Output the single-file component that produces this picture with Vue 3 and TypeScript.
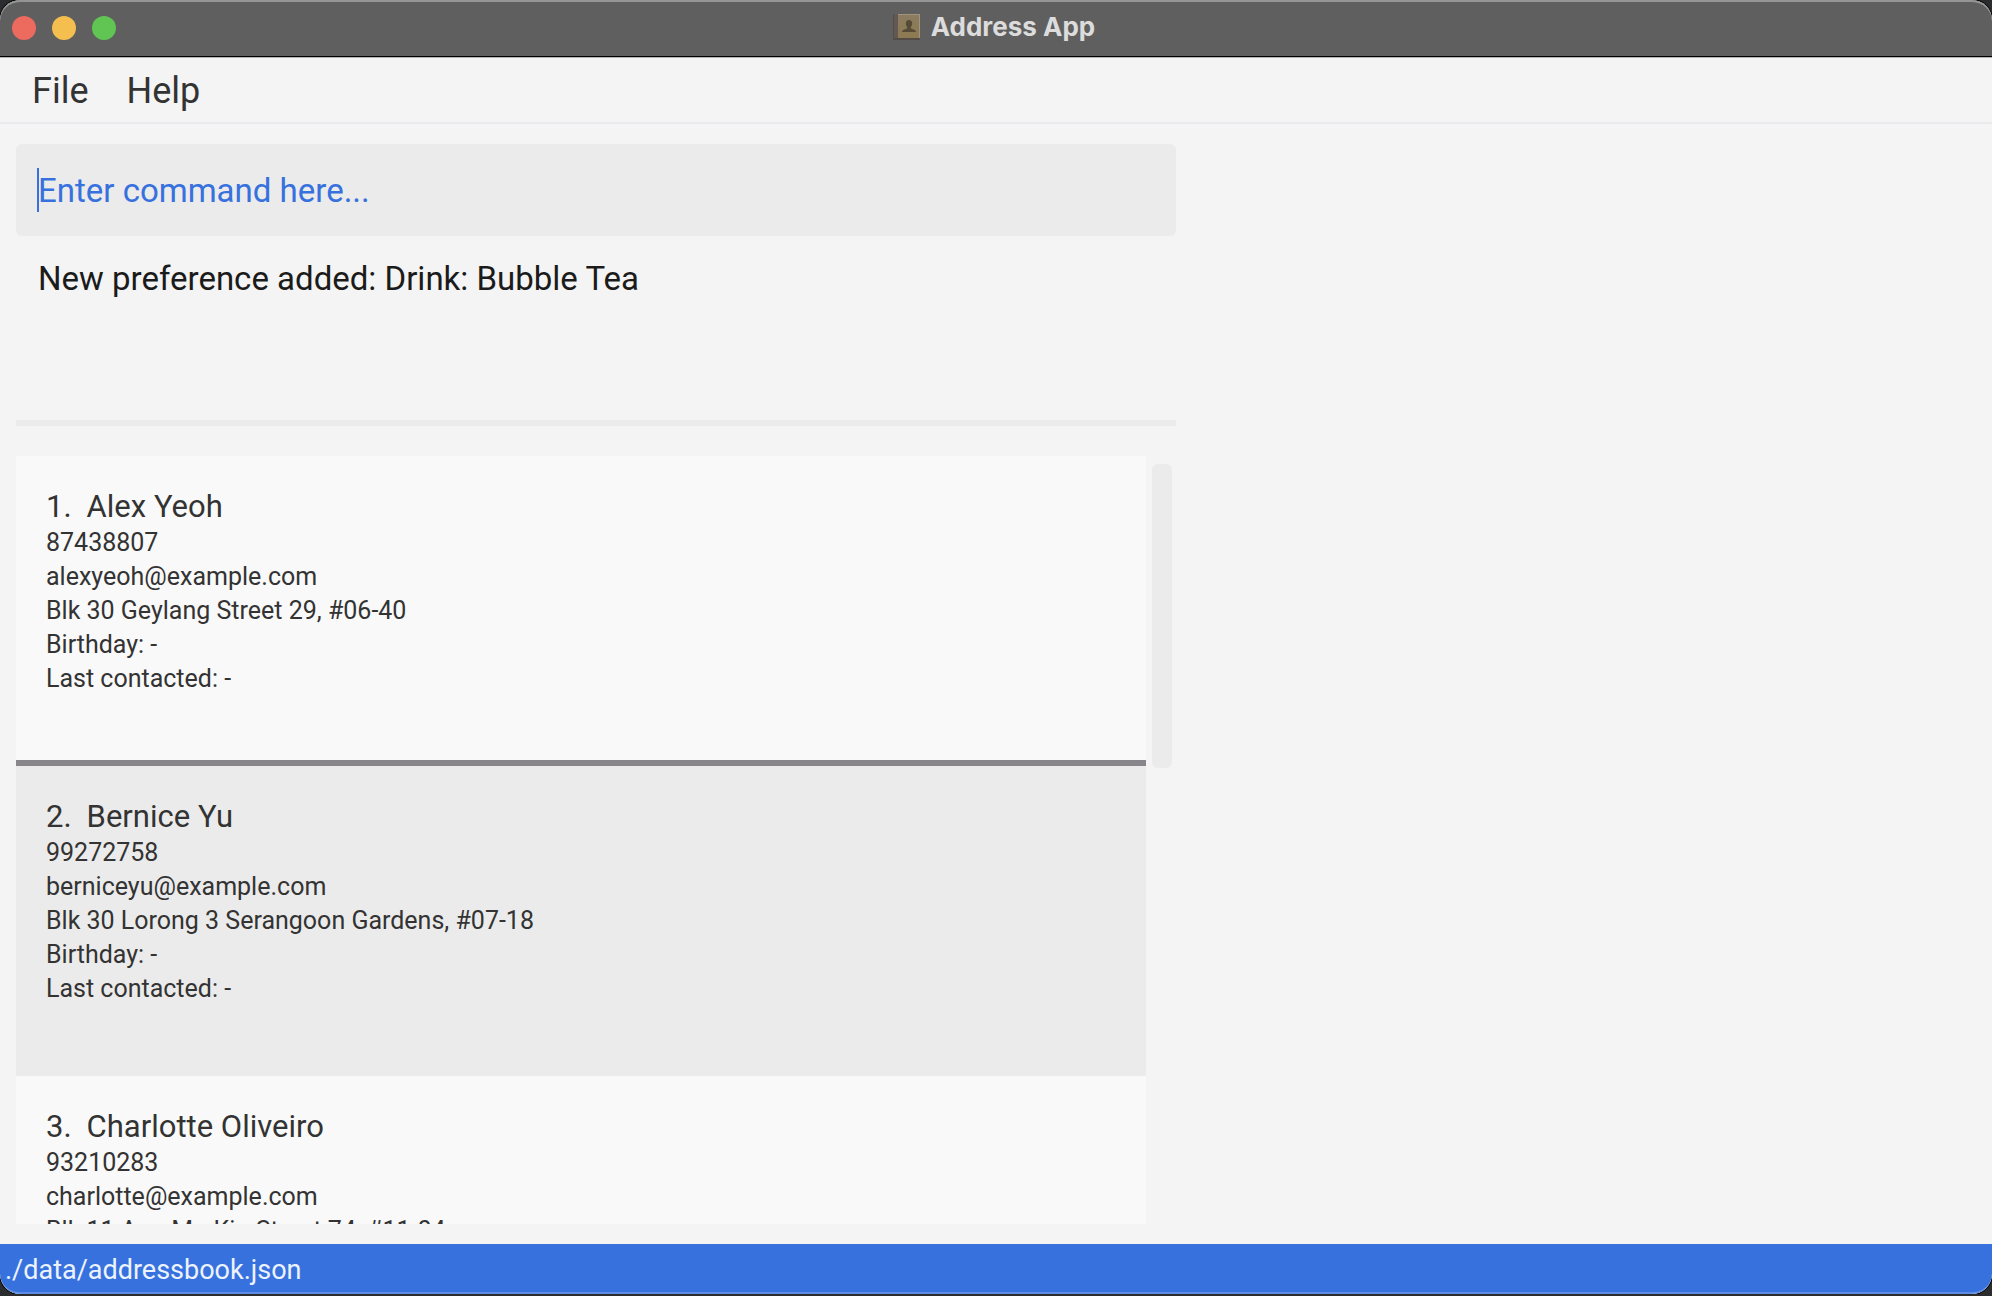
<script setup lang="ts">
import { ref } from 'vue'

interface Person {
  id: number
  name: string
  phone: string
  email: string
  address: string
  birthday: string
  lastContacted: string
}

const menus: string[] = ['File', 'Help']
const command = ref('')
const feedback = ref('New preference added: Drink: Bubble Tea')
const selectedId = ref(1)
const savePath = './data/addressbook.json'

const people: Person[] = [
  {
    id: 1,
    name: 'Alex Yeoh',
    phone: '87438807',
    email: 'alexyeoh@example.com',
    address: 'Blk 30 Geylang Street 29, #06-40',
    birthday: '-',
    lastContacted: '-',
  },
  {
    id: 2,
    name: 'Bernice Yu',
    phone: '99272758',
    email: 'berniceyu@example.com',
    address: 'Blk 30 Lorong 3 Serangoon Gardens, #07-18',
    birthday: '-',
    lastContacted: '-',
  },
  {
    id: 3,
    name: 'Charlotte Oliveiro',
    phone: '93210283',
    email: 'charlotte@example.com',
    address: 'Blk 11 Ang Mo Kio Street 74, #11-04',
    birthday: '-',
    lastContacted: '-',
  },
]
</script>

<template>
  <div class="window">
    <header class="titlebar">
      <div class="lights">
        <button class="light close" type="button" aria-label="Close"></button>
        <button class="light minimise" type="button" aria-label="Minimise"></button>
        <button class="light zoom" type="button" aria-label="Zoom"></button>
      </div>
      <svg class="book" viewBox="0 0 28 28" aria-hidden="true">
        <defs>
          <linearGradient id="cover" x1="0" y1="0" x2="0" y2="1">
            <stop offset="0" stop-color="#8b7c62" />
            <stop offset="1" stop-color="#8d7a50" />
          </linearGradient>
        </defs>
        <rect x="0" y="1" width="27" height="26" rx="1" fill="#524b48" />
        <rect x="1" y="1" width="4" height="24" fill="#625955" />
        <rect x="5" y="1" width="22" height="24" fill="url(#cover)" />
        <path d="M5 1.5H27M26.5 1V25" stroke="#a1947b" fill="none" />
        <path
          d="M16 7c-2 0-3.200 1.400-3.200 3.400 0 1.500.6 2.800 1.400 3.500v1.300c-1 1-5.200 1.200-5.200 3.800h14c0-2.600-4.200-2.800-5.200-3.800v-1.300c.8-.7 1.400-2 1.400-3.500C19.200 8.400 18 7 16 7z"
          fill="#564b37"
        />
      </svg>
      <h1 class="title">Address App</h1>
    </header>

    <nav class="menubar">
      <button v-for="menu in menus" :key="menu" class="menu" type="button">{{ menu }}</button>
    </nav>

    <div class="content">
      <main class="left">
        <div class="command">
          <input
            v-model="command"
            class="command-input"
            type="text"
            aria-label="Command"
            placeholder="Enter command here..."
          />
          <span v-if="!command" class="caret"></span>
        </div>
        <output class="result">{{ feedback }}</output>

        <section class="list-area">
          <ol class="list">
            <li
              v-for="person in people"
              :key="person.id"
              class="card"
              :class="{ selected: person.id === selectedId }"
              @click="selectedId = person.id"
            >
              <h2 class="name">
                <span>{{ person.id }}.</span>
                <span>{{ person.name }}</span>
              </h2>
              <p class="detail">{{ person.phone }}</p>
              <p class="detail">{{ person.email }}</p>
              <p class="detail">{{ person.address }}</p>
              <p class="detail">Birthday: {{ person.birthday }}</p>
              <p class="detail">Last contacted: {{ person.lastContacted }}</p>
            </li>
          </ol>
          <div class="track"><div class="thumb"></div></div>
        </section>
      </main>
      <aside class="right"></aside>
    </div>

    <footer class="status">{{ savePath }}</footer>
  </div>
</template>

<style>
body {
  margin: 0;
  background: #2b2c2e;
}
</style>

<style scoped>
.window {
  box-sizing: border-box;
  display: flex;
  flex-direction: column;
  height: calc(100vh - 2px);
  overflow: hidden;
  border-radius: 20px;
  background: #f4f4f4;
  box-shadow: 0 0 0 1px #000;
  color: #333;
  font-family: Roboto, "Liberation Sans", sans-serif;
}

button {
  margin: 0;
  padding: 0;
  border: 0;
  background: none;
  color: inherit;
  font: inherit;
}

.titlebar {
  position: relative;
  display: flex;
  flex: none;
  align-items: center;
  justify-content: center;
  gap: 10px;
  box-sizing: border-box;
  height: 58px;
  padding-right: 4px;
  padding-bottom: 4px;
  border-bottom: 1px solid #b5b5b5;
  border-radius: 20px 20px 0 0;
  background: #5f5f5f;
  box-shadow: inset 0 2px #959595, inset 0 -1px #000;
}

.lights {
  position: absolute;
  top: 16px;
  left: 12px;
  display: flex;
  gap: 16px;
}

.light {
  width: 24px;
  height: 24px;
  border-radius: 50%;
}

.close {
  background: #ed6a5f;
}

.minimise {
  background: #f5bf4f;
}

.zoom {
  background: #61c554;
}

.book {
  width: 28px;
  height: 28px;
}

.title {
  margin: 0;
  color: #dcdcdc;
  font-family: Inter, "Liberation Sans", sans-serif;
  font-size: 26px;
  font-weight: 700;
  line-height: 32px;
}

.menubar {
  display: flex;
  flex: none;
  gap: 38px;
  padding: 11px 32px 9px;
  border-bottom: 2px solid #eaeaee;
}

.menu {
  font-size: 36px;
  line-height: 44px;
}

.content {
  display: grid;
  grid-template-columns: minmax(0, 149fr) minmax(0, 100fr);
  grid-template-rows: minmax(0, 1fr);
  flex: 1;
  min-height: 0;
}

.left {
  display: flex;
  flex-direction: column;
  box-sizing: border-box;
  padding: 20px 16px;
}

.command {
  position: relative;
  flex: none;
}

.command-input {
  display: block;
  box-sizing: border-box;
  width: 100%;
  height: 92px;
  padding: 0 22px;
  border: 0;
  border-radius: 6px;
  outline: none;
  background: #ebebeb;
  color: #3771de;
  font-family: inherit;
  font-size: 33px;
}

.command-input::placeholder {
  color: #3771de;
  opacity: 1;
}

.caret {
  position: absolute;
  top: 24px;
  left: 21px;
  width: 2px;
  height: 44px;
  background: #3771de;
}

.result {
  box-sizing: border-box;
  flex: none;
  height: 190px;
  padding: 21px 22px;
  border-bottom: 6px solid #ebebeb;
  color: #1b1b1b;
  font-size: 33px;
  line-height: 44px;
}

.list-area {
  display: flex;
  flex: 1;
  gap: 6px;
  min-height: 0;
  margin-top: 30px;
}

.list {
  flex: 1;
  margin: 0;
  padding: 0;
  overflow: hidden;
  list-style: none;
}

.card {
  box-sizing: border-box;
  height: 310px;
  padding: 32px 30px;
  background: #f9f9f9;
}

.card:nth-child(even) {
  background: #ebebeb;
}

.card.selected {
  border-bottom: 6px solid #88868b;
}

.name {
  display: flex;
  gap: 15px;
  margin: 0;
  font-size: 31px;
  font-weight: 400;
  line-height: 38px;
}

.detail {
  margin: 0;
  font-size: 25px;
  line-height: 34px;
}

.track {
  width: 24px;
  padding-top: 8px;
}

.thumb {
  width: 20px;
  height: 304px;
  border-radius: 6px;
  background: #ebebeb;
}

.status {
  flex: none;
  box-sizing: border-box;
  height: 50px;
  padding: 4px 5px;
  border-bottom: 2px solid #5f8de5;
  border-radius: 0 0 20px 20px;
  background: #3771de;
  color: #edf3fd;
  font-size: 27px;
  line-height: 44px;
}
</style>
